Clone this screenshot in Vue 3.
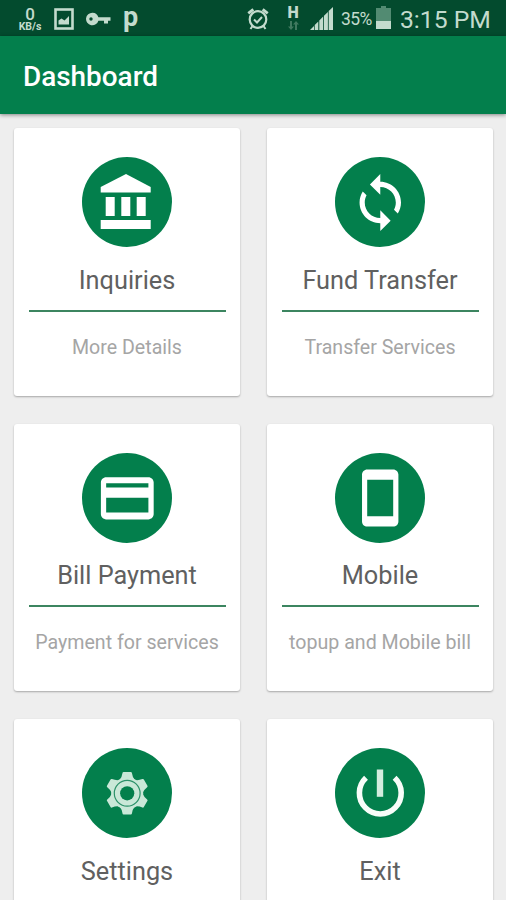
<script setup>
const cards = [
  { title: 'Inquiries', subtitle: 'More Details', icon: 'bank' },
  { title: 'Fund Transfer', subtitle: 'Transfer Services', icon: 'sync' },
  { title: 'Bill Payment', subtitle: 'Payment for services', icon: 'card' },
  { title: 'Mobile', subtitle: 'topup and Mobile bill', icon: 'phone' },
  { title: 'Settings', subtitle: '', icon: 'gear' },
  { title: 'Exit', subtitle: '', icon: 'power' },
];

const teeth = [0, 60, 120, 180, 240, 300];
</script>

<template>
  <div class="screen">
    <div class="status-bar">
      <div class="status-left">
        <div class="speed">
          <span class="speed-value">0</span>
          <span class="speed-unit">KB/s</span>
        </div>
        <svg class="picture" width="20" height="22" viewBox="0 0 20 22">
          <rect x="1.5" y="1.5" width="17" height="19" fill="none" stroke="currentColor" stroke-width="2.6" />
          <path d="M4.5 16.5v-4l3-2 3 2 4.5-4.5v8.5z" fill="currentColor" />
        </svg>
        <svg class="key" width="25" height="14" viewBox="0 0 25 14">
          <path
            d="M6.5 .7a6.3 6.3 0 1 0 5.900 8H18v2.800h4V8.700h2.500V5.300H12.400A6.300 6.300 0 0 0 6.500 .7zM5 5.300a1.700 1.700 0 1 1 0 3.400 1.700 1.700 0 0 1 0-3.400z"
            fill="currentColor"
            fill-rule="evenodd"
          />
        </svg>
        <span class="letter-p">p</span>
      </div>

      <div class="status-right">
        <svg class="alarm" width="22" height="24" viewBox="0 0 22 24">
          <g fill="none" stroke="currentColor">
            <circle cx="11" cy="12.5" r="8.3" stroke-width="2.2" />
            <path d="M7 12.5l3 3 5-5.500" stroke-width="2" />
            <path d="M1.300 6.300l5-4M20.700 6.300l-5-4" stroke-width="2.8" />
            <path d="M5.500 19l-2 3M16.500 19l2 3" stroke-width="2" />
          </g>
        </svg>
        <div class="network">
          <span class="network-type">H</span>
          <svg width="11" height="9" viewBox="0 0 11 9">
            <path d="M3 9L0 5.500h2V0h2v5.500h2zM8 0l3 3.500H9V9H7V3.500H5z" fill="currentColor" />
          </svg>
        </div>
        <svg class="signal" width="23" height="23" viewBox="0 0 23 23">
          <path
            d="M0 23l4-4v4zM4.700 23v-5l3.600-3.500V23zM9.300 23v-9.500l3.900-4V23zM14 23V8.700L17.900 5v18zM18.700 23V4L23 0v23z"
            fill="currentColor"
          />
        </svg>
        <span class="percent">35%</span>
        <svg class="battery" width="15" height="23" viewBox="0 0 15 23">
          <path d="M5 0h5v2h5v13H0V2h5z" fill="#528b72" />
          <path d="M0 15h15v8H0z" fill="currentColor" />
        </svg>
        <span class="clock">3:15 PM</span>
      </div>
    </div>

    <header class="toolbar">
      <h1>Dashboard</h1>
    </header>

    <main class="grid">
      <section v-for="card in cards" :key="card.title" class="card">
        <svg class="badge" width="90" height="90" viewBox="0 0 90 90">
          <circle cx="45" cy="45" r="45" fill="#037f4c" />
          <g v-if="card.icon === 'bank'" fill="#fff">
            <path d="M44 17l24.700 13v5.500h-50V30z" />
            <path d="M23.700 40h9v19h-9zM39.300 40h9v19h-9zM54.700 40h9v19h-9zM18.700 63h50v9h-50z" />
          </g>
          <path
            v-else-if="card.icon === 'sync'"
            transform="translate(14.2 14.5) scale(2.59)"
            fill="#fff"
            d="M12 4V1L8 5l4 4V6c3.310 0 6 2.690 6 6 0 1.010-.25 1.970-.7 2.800l1.460 1.460C19.540 15.030 20 13.570 20 12c0-4.420-3.580-8-8-8zm0 14c-3.310 0-6-2.690-6-6 0-1.010.25-1.970.7-2.800L5.240 7.740C4.460 8.970 4 10.430 4 12c0 4.420 3.580 8 8 8v3l4-4-4-4v3z"
          />
          <path
            v-else-if="card.icon === 'card'"
            transform="translate(13.6 13.6) scale(2.64)"
            fill="#fff"
            d="M20 4H4c-1.110 0-1.990.89-1.990 2L2 18c0 1.110.89 2 2 2h16c1.110 0 2-.89 2-2V6c0-1.110-.89-2-2-2zm0 13.400H4v-5.600h16v5.600zm0-9.500H4V6.300h16v1.600z"
          />
          <path
            v-else-if="card.icon === 'phone'"
            transform="translate(14 13.8) scale(2.6)"
            fill="#fff"
            d="M17 1.010L7 1c-1.100 0-1.990.9-1.990 2v18c0 1.100.89 2 1.990 2h10c1.100 0 2-.9 2-2V3c0-1.100-.9-1.990-2-1.990zM17 19H7V5h10v14z"
          />
          <g v-else-if="card.icon === 'gear'" transform="translate(45.2 45.3)">
            <circle r="16" fill="#c9e8d8" />
            <path
              v-for="angle in teeth"
              :key="angle"
              :transform="`rotate(${angle})`"
              d="M-7.500-13.500Q-5.300-16-4.700-20.300Q-4.600-21.300-3.600-21.300H3.600Q4.600-21.300 4.700-20.300Q5.300-16 7.500-13.500z"
              fill="#c9e8d8"
            />
            <circle r="12.9" fill="none" stroke="#2b9169" stroke-width="1.2" />
            <circle r="7.1" fill="#037f4c" />
          </g>
          <g v-else fill="none">
            <path d="M31 29.800A20.900 20.900 0 1 0 59.600 29.800" stroke="#f8fdf9" stroke-width="5.6" />
            <path d="M45 21.500v27.300" stroke="#d5ecdf" stroke-width="6.4" />
          </g>
        </svg>
        <h2>{{ card.title }}</h2>
        <hr />
        <p v-if="card.subtitle">{{ card.subtitle }}</p>
      </section>
    </main>
  </div>
</template>

<style>
body {
  margin: 0;
  background: #eee;
}
</style>

<style scoped>
.screen {
  display: flex;
  flex-direction: column;
  width: 506px;
  height: 900px;
  overflow: hidden;
  background: #eee;
  font-family: Roboto, 'Liberation Sans', sans-serif;
}

.status-bar {
  display: flex;
  flex: none;
  justify-content: space-between;
  box-sizing: border-box;
  height: 36px;
  padding: 0 15px 0 18px;
  background: #034b2e;
  color: #c3dbcd;
}

.status-left,
.status-right {
  display: flex;
  align-items: flex-start;
}

.speed {
  display: flex;
  flex-direction: column;
  align-items: center;
  width: 24px;
  padding-top: 5px;
}

.speed-value {
  font-size: 17px;
  font-weight: 500;
  line-height: 18px;
}

.speed-unit {
  font-size: 10.5px;
  font-weight: 700;
  line-height: 8px;
}

.picture {
  margin: 8px 0 0 12px;
}

.key {
  margin: 12px 0 0 12px;
}

.letter-p {
  margin: 0 0 0 12px;
  font-size: 27px;
  font-weight: 700;
  line-height: 34px;
}

.alarm {
  margin-top: 7px;
}

.network {
  display: flex;
  flex-direction: column;
  align-items: center;
  width: 12px;
  margin: 5px 0 0 18px;
}

.network-type {
  font-size: 16px;
  font-weight: 900;
  line-height: 15px;
}

.network svg {
  margin-top: 1px;
  color: #40795f;
}

.signal {
  margin: 7px 0 0 11px;
}

.percent {
  width: 30px;
  margin: 0 0 0 8px;
  font-size: 17.5px;
  line-height: 39px;
  letter-spacing: -0.6px;
}

.battery {
  margin: 6px 0 0 5px;
}

.clock {
  width: 91px;
  margin-left: 9px;
  font-size: 24.7px;
  line-height: 40px;
  white-space: nowrap;
}

.toolbar {
  display: flex;
  flex: none;
  align-items: center;
  height: 78px;
  padding-left: 23px;
  background: #037f4c;
  box-shadow: 0 1px 4px rgba(0, 0, 0, 0.45);
}

h1 {
  margin: 3px 0 0;
  color: #fff;
  font-size: 27.9px;
  font-weight: 500;
  line-height: 32px;
}

.grid {
  display: grid;
  grid-template-columns: 226px 226px;
  grid-auto-rows: 267.5px;
  gap: 28px 27px;
  padding: 14.4px 0 0 14px;
}

.card {
  display: flex;
  flex-direction: column;
  align-items: center;
  box-sizing: border-box;
  padding: 29px 14px 0;
  border-radius: 3px;
  background: #fff;
  box-shadow: 0 1px 2px rgba(0, 0, 0, 0.3);
}

.badge {
  display: block;
  flex: none;
}

h2 {
  margin: 17.5px 0 0;
  color: #606060;
  font-size: 25.3px;
  font-weight: 400;
  line-height: 32px;
  white-space: nowrap;
}

hr {
  width: 197px;
  height: 2px;
  margin: 12.8px 0 0;
  border: 0;
  background: #3c8560;
}

p {
  margin: 22.9px 0 0;
  color: #a5a5a5;
  font-size: 19.6px;
  line-height: 26px;
  white-space: nowrap;
}
</style>
